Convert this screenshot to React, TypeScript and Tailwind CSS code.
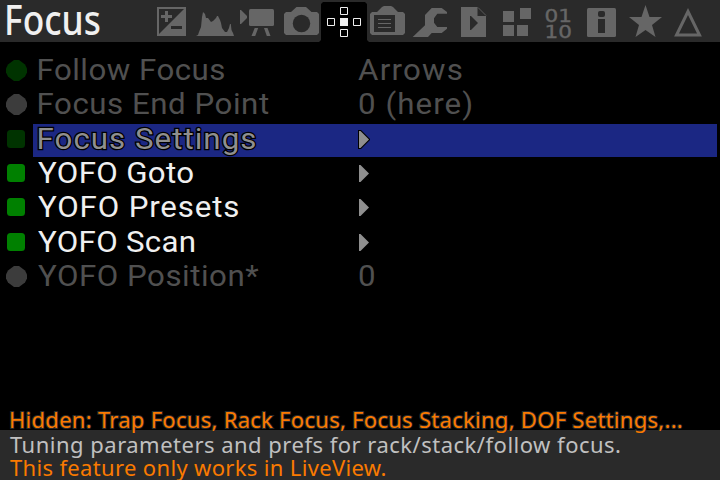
import type { ReactNode } from "react";

type Row = {
  label: string;
  value?: string;
  bullet: "circle" | "square";
  height: string;
  color: string;
  bulletColor: string;
  tracking: string;
  valueTracking?: string;
  selected?: boolean;
};

const rows: Row[] = [
  { label: "Follow Focus", value: "Arrows", bullet: "circle", height: "h-[34px]", color: "text-[#505050]", bulletColor: "text-[#003300]", tracking: "pl-[0.5px] tracking-[0.45px]", valueTracking: "tracking-[1.17px]" },
  { label: "Focus End Point", value: "0 (here)", bullet: "circle", height: "h-[35px]", color: "text-[#505050]", bulletColor: "text-[#3c3c3c]", tracking: "pl-[0.5px] tracking-[0.5px]", valueTracking: "tracking-[1px]" },
  { label: "Focus Settings", bullet: "square", height: "h-[34px]", color: "text-[#8f8f8f]", bulletColor: "text-[#003300]", tracking: "pl-[0.5px] tracking-[0.97px]", selected: true },
  { label: "YOFO Goto", bullet: "square", height: "h-[34px]", color: "text-[#f0f0f0]", bulletColor: "text-[#008000]", tracking: "pl-[2px] tracking-[0.32px]" },
  { label: "YOFO Presets", bullet: "square", height: "h-[35px]", color: "text-[#f0f0f0]", bulletColor: "text-[#008000]", tracking: "pl-[2px] tracking-[0.78px]" },
  { label: "YOFO Scan", bullet: "square", height: "h-[34px]", color: "text-[#f0f0f0]", bulletColor: "text-[#008000]", tracking: "pl-[2px] tracking-[0.28px]" },
  { label: "YOFO Position*", value: "0", bullet: "circle", height: "h-[34px]", color: "text-[#505050]", bulletColor: "text-[#3c3c3c]", tracking: "pl-[2px] tracking-[0.48px]", valueTracking: "tracking-[0px]" },
];

const BG = "#2a2a2a";

// Every tab glyph is drawn in header coordinates; its cell shows a 43px wide slice.
const tabs: ReactNode[] = [
  <g>
    <path d="M158 8h27v27h-27z" fill="none" stroke="currentColor" strokeWidth="2" />
    <path d="M186 7v29h-29z" />
    <path d="M161 15h4v-4h3v4h4v3h-4v4h-3v-4h-4z" />
    <path d="M171 26h11v3h-11z" fill={BG} />
  </g>,
  <path d="M196 36l2-1 1-3 2-5 1-10 1-5 2 2 1 4h2l3 4 2-1 3-3 1-2h1l2 4 1 3 1 5 3 4h2l2-4 1-4 .8 0 .7 6 1.500 3 1 3z" />,
  <g>
    <path d="M240 10h1l6 6v2l-6 6h-1z" />
    <rect x="249" y="9" width="25" height="17" rx="1.5" />
    <path d="M254.700 28h3.500l-3 8h-3.700zM264 28h3.500l3 8h-3.700z" />
  </g>,
  <g>
    <path d="M286 12h5l5.500-5h9.500l5.500 5h5.500l2 2v19l-2 2h-31l-2-2v-19z" />
    <circle cx="301.5" cy="23.5" r="8.7" fill={BG} />
  </g>,
  <g className="text-[#f0f0f0]">
    <path d="M340.500 7.500h7v7h-7zM327.500 18.500h7v7h-7zM353.500 18.500h7v7h-7zM340.500 29.500h7v7h-7z" fill="none" stroke="currentColor" />
    <path d="M340 18h8v8h-8z" fill="currentColor" />
  </g>,
  <g>
    <path d="M372 12h5l5-5 2-1h7l2 1 5 5h5l2 2v19l-2 2h-31l-2-2v-19z" />
    <path d="M374 15h21v17h-21z" fill={BG} />
    <path d="M378 19h13v1h-13zM378 23h13v1h-13zM378 27h13v1h-13z" />
  </g>,
  <path d="M412.700 37L425 25.300V15l6.700-7h10l5.300 4v1.700h-9.700l-3.300 4.600v4.400l3.300 4.300h9.700v1.700l-5.300 4.300h-10l-3.700 4z" />,
  <g>
    <path d="M461 7h16.500v9H486v21h-25z" />
    <path d="M478 7.500l8 8" fill="none" stroke="currentColor" strokeWidth=".8" />
    <path d="M470 16h1l7 7-7 7h-1z" fill={BG} />
  </g>,
  <path d="M503 11h11v11h-11zM520 8h11v11h-11zM503 25h11v11h-11zM517 25h11v11h-11z" />,
  <g className="font-['DejaVu_Sans',sans-serif] text-[18.5px]" stroke="currentColor" strokeWidth=".4">
    <text x="544.500" y="21.700" textLength="27.500" lengthAdjust="spacingAndGlyphs">01</text>
    <text x="544.500" y="37.700" textLength="27.500" lengthAdjust="spacingAndGlyphs">10</text>
  </g>,
  <g>
    <rect x="587" y="8" width="29" height="29" rx="1.500" />
    <rect x="598" y="11" width="7" height="6" rx="2" fill={BG} />
    <path d="M598 19h7v14h-7z" fill={BG} />
  </g>,
  <path d="M645.500 5l4 12h12.500l-10 8 3.500 12-10-7-10 7 3.500-12-10-8h12.500z" />,
  <path d="M688 11.500l11.500 23.500h-23z" fill="none" stroke="currentColor" strokeWidth="3" />,
];

const viewBoxOf = (i: number) => `${150 + 43 * i} 0 43 42`;

function TabIcon({ index, children }: { index: number; children: ReactNode }) {
  return (
    <svg className="h-[42px] w-[43px] shrink-0 overflow-visible fill-current" viewBox={viewBoxOf(index)}>
      {index === 4 && <path d="M319 42l2-2V4l2-2h42l2 2v36l2 2z" fill="#000" />}
      {children}
    </svg>
  );
}

function Bullet({ kind }: { kind: Row["bullet"] }) {
  return (
    <svg className="mt-[5px] h-[21px] w-[21px] shrink-0 fill-current" viewBox="0 0 21 21">
      {kind === "circle" ? (
        <path d="M8 0h5l6 4.500 2 4v4l-2 4-6 4.500H8l-6-4.500-2-4v-4l2-4z" />
      ) : (
        <rect x="1" y="1" width="18" height="18" rx="3.500" />
      )}
    </svg>
  );
}

function MenuRow({ row }: { row: Row }) {
  const outline = row.selected ? "[-webkit-text-stroke:2.5px_#000] [paint-order:stroke_fill]" : "";
  return (
    <li className={`flex items-start pl-[6px] pr-[3px] ${row.height}`}>
      <span className={row.bulletColor}>
        <Bullet kind={row.bullet} />
      </span>
      <div className={`ml-[6px] flex h-[33px] flex-1 pl-[3px] leading-[30px] ${row.selected ? "bg-[#1b2783]" : ""} ${row.color} ${outline}`}>
        <span className="w-[322px] shrink-0">
          <span className={`inline-block origin-left scale-x-[1.06] whitespace-pre ${row.tracking}`}>{row.label}</span>
        </span>
        {row.value ? (
          <span className={`inline-block origin-left scale-x-[1.06] whitespace-pre ${row.valueTracking}`}>{row.value}</span>
        ) : (
          <svg className="mt-[6px] h-[19px] w-[12px] overflow-visible" viewBox="0 0 12 19">
            {row.selected && <path d="M0 0h3l9 9v1l-9 9H0z" fill="#000" />}
            <path d="M1 1h1.500l8.500 8.500L2.500 18H1z" fill="#8f8f8f" />
          </svg>
        )}
      </div>
    </li>
  );
}

export default function App() {
  return (
    <div className="flex h-[480px] w-[720px] flex-col overflow-hidden bg-black font-['Roboto',sans-serif]">
      <header className="flex h-[42px] shrink-0 bg-[#2a2a2a] text-[#666666]">
        <h1 className="w-[150px] shrink-0 pl-[4px]">
          <span className="inline-block origin-left scale-x-[0.84] font-['Noto_Sans',sans-serif] text-[42px] leading-[38px] font-medium text-[#f0f0f0]">Focus</span>
        </h1>
        {tabs.map((glyph, i) => (
          <TabIcon key={i} index={i}>{glyph}</TabIcon>
        ))}
      </header>
      <ul className="mt-[13px] text-[29.5px] font-normal">
        {rows.map((row) => (
          <MenuRow key={row.label} row={row} />
        ))}
      </ul>
      <footer className="mt-auto font-['Noto_Sans',sans-serif] text-[22px] whitespace-pre">
        <p className="relative z-10 h-[22px] pl-[9px] leading-[22px] tracking-[0.28px] text-[#fa7a00] [-webkit-text-stroke:2px_#2a2a2a] [paint-order:stroke_fill]">Hidden: Trap Focus, Rack Focus, Focus Stacking, DOF Settings,...</p>
        <div className="h-[50px] bg-[#2a2a2a] pl-[10px]">
          <p className="h-[23px] leading-[28px] tracking-[0.49px] text-[#c0c0c0]">Tuning parameters and prefs for rack/stack/follow focus.</p>
          <p className="h-[23px] leading-[28px] tracking-[0.34px] text-[#fa7a00]">This feature only works in LiveView.</p>
        </div>
      </footer>
    </div>
  );
}
